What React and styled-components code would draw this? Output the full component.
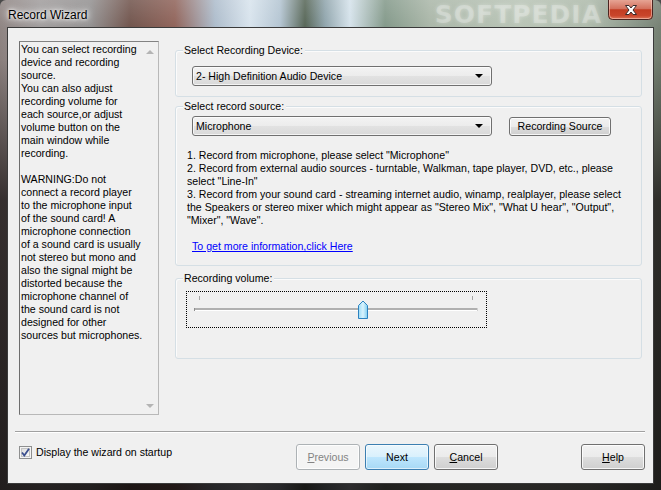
import React from "react";
import styled, { createGlobalStyle } from "styled-components";

const GlobalStyle = createGlobalStyle`
  html, body {
    margin: 0;
    padding: 0;
    width: 661px;
    height: 490px;
    overflow: hidden;
    background: #4a4a4a;
  }
  body {
    font-family: "Liberation Sans", Arial, sans-serif;
    font-size: 10.6px;
    color: #000;
  }
`;

const Frame = styled.div`
  width: 661px;
  height: 490px;
  box-sizing: border-box;
  border-radius: 6px 6px 0 0;
  overflow: hidden;
  display: flex;
  flex-direction: column;
  background:
    linear-gradient(to bottom, rgba(255, 255, 255, 0.18) 0px, rgba(255, 255, 255, 0.05) 28px, rgba(0, 0, 0, 0) 60px, rgba(25, 20, 20, 0.75) 200px, rgba(15, 12, 12, 0.85) 100%),
    linear-gradient(to right, #8a7f7d 0px, #9c9898 40px, #8e8c8c 90px, #6a4c44 130px, #8b5c52 175px, #a9b9c9 215px, #d6e2ec 250px, #b0c2d0 280px, #4e5e4e 305px, #8aa0a8 325px, #d3e1ea 350px, #7d9484 385px, #a6b3a4 430px, #b5c1b2 520px, #a9b6a6 590px, #7f8c7e 640px, #6f7a6c 661px);
`;

const TitleBar = styled.div`
  height: 28px;
  flex: none;
  display: flex;
  align-items: flex-start;
  padding-left: 8px;
`;

const Title = styled.div`
  margin-top: 8px;
  font-family: "Liberation Sans", Arial, sans-serif;
  font-size: 12px;
  line-height: 14px;
  color: #000;
  text-shadow: 0 0 6px #fff, 0 0 10px rgba(255, 255, 255, 0.9), 0 0 3px #fff;
`;

const Watermark = styled.div`
  margin: 2px 0 0 auto;
  font-family: "DejaVu Sans", sans-serif;
  font-weight: bold;
  font-size: 25px;
  line-height: 26px;
  letter-spacing: 1px;
  color: rgba(255, 255, 255, 0.25);
  text-shadow: 0 0 4px rgba(255, 255, 255, 0.3);
`;

const CloseButton = styled.div`
  width: 45px;
  height: 20px;
  margin: 0 8px 0 6px;
  flex: none;
`;

const Client = styled.div`
  flex: none;
  margin: 0 8px;
  width: 645px;
  height: 455px;
  background: #f0f0f0;
  box-shadow: 0 0 0 1px #3a3a3a;
  display: flex;
  flex-direction: column;
`;

const Body = styled.div`
  height: 403px;
  display: flex;
`;

const InfoPanel = styled.div`
  margin: 13px 0 0 11px;
  width: 140px;
  height: 374px;
  box-sizing: border-box;
  border: 1px solid #b8b8b8;
  border-top-color: #828282;
  border-left-color: #6e6e6e;
  display: flex;
`;

const InfoText = styled.div`
  flex: 1;
  padding: 1px 0 0 1px;
  line-height: 13px;
  white-space: pre;
  overflow: hidden;
`;

const ScrollColumn = styled.div`
  width: 16px;
  display: flex;
  flex-direction: column;
  justify-content: space-between;
  align-items: center;
  padding: 8px 0 6px;
  box-sizing: border-box;
`;

const Arrow = styled.div`
  width: 0;
  height: 0;
  border-left: 4px solid transparent;
  border-right: 4px solid transparent;
  ${(p) => (p.$up ? "border-bottom: 4px solid #b4b4b4;" : "border-top: 4px solid #b4b4b4;")}
`;

const RightColumn = styled.div`
  margin-left: 16px;
  width: 467px;
`;

const Group = styled.div`
  margin-top: ${(p) => p.$mt}px;
  height: ${(p) => p.$h}px;
  box-sizing: border-box;
  border: 1px solid #d5dfe5;
  border-radius: 3px;
  box-shadow: inset 1px 1px 0 #fbfbfb;
`;

const Legend = styled.div`
  width: fit-content;
  margin: -7px 0 0 7px;
  padding: 0 2px 0 1px;
  background: #f0f0f0;
  line-height: 13px;
`;

const Combo = styled.div`
  margin: ${(p) => p.$mt}px 0 0 16px;
  width: 300px;
  height: 20px;
  box-sizing: border-box;
  border: 1px solid #707070;
  border-radius: 3px;
  background: linear-gradient(#f3f3f3 0%, #ececec 50%, #e2e2e2 51%, #d9d9d9 100%);
  box-shadow: inset 0 0 0 1px rgba(255, 255, 255, 0.7);
  display: flex;
  align-items: center;
  padding: 0 8px 0 3px;
  line-height: 13px;
`;

const ComboArrow = styled.div`
  margin-left: auto;
  width: 0;
  height: 0;
  border-left: 4px solid transparent;
  border-right: 4px solid transparent;
  border-top: 4px solid #000;
`;

const SourceRow = styled.div`
  display: flex;
  align-items: center;
  margin-top: 3px;
  gap: 17px;
`;

const SmallButton = styled.div`
  width: 102px;
  height: 19px;
  box-sizing: border-box;
  border: 1px solid #707070;
  border-radius: 3px;
  background: linear-gradient(#f2f2f2 0%, #ebebeb 50%, #dddddd 51%, #cfcfcf 100%);
  box-shadow: inset 0 0 0 1px rgba(255, 255, 255, 0.8);
  display: flex;
  align-items: center;
  justify-content: center;
  line-height: 13px;
`;

const Steps = styled.div`
  margin: 13px 0 0 11px;
  line-height: 13px;
  white-space: pre;
`;

const MoreLink = styled.a`
  display: block;
  margin: 13px 0 0 16px;
  line-height: 13px;
  color: #0000ff;
  text-decoration: underline;
  width: fit-content;
`;

const SliderFocus = styled.div`
  margin: 6px 0 0 10px;
  width: 301px;
  height: 37px;
  box-sizing: border-box;
  border: 1px dotted #000;
`;

const Separator = styled.div`
  margin: 0 8px 0 7px;
  border-top: 1px solid #a0a0a0;
  border-bottom: 1px solid #ffffff;
  height: 0;
`;

const Footer = styled.div`
  display: flex;
  align-items: flex-start;
  padding: 11px 8px 0 11px;
`;

const CheckGroup = styled.label`
  flex: 1;
  display: flex;
  align-items: center;
  margin-top: 2px;
  gap: 4px;
  line-height: 13px;
`;

const ButtonGroup = styled.div`
  display: flex;
  gap: 5px;
`;

const WizardButton = styled.div`
  width: 64px;
  height: 26px;
  box-sizing: border-box;
  border-radius: 3px;
  display: flex;
  align-items: center;
  justify-content: center;
  line-height: 13px;
  margin-left: ${(p) => p.$ml || 0}px;
  border: 1px solid ${(p) => (p.$disabled ? "#adb2b5" : p.$default ? "#3c7fb1" : "#707070")};
  color: ${(p) => (p.$disabled ? "#838383" : "#000")};
  background: ${(p) =>
    p.$disabled
      ? "#f4f4f4"
      : p.$default
      ? "linear-gradient(#eaf6fd 0%, #d9f0fc 50%, #bee6fd 51%, #a7d9f5 100%)"
      : "linear-gradient(#f2f2f2 0%, #ebebeb 50%, #dddddd 51%, #cfcfcf 100%)"};
  box-shadow: inset 0 0 0 1px ${(p) => (p.$default ? "rgba(255,255,255,0.6)" : "rgba(255,255,255,0.8)")};
  u {
    text-decoration: underline;
  }
`;

function CloseGlyph() {
  return (
    <svg width="45" height="20" viewBox="0 0 45 20">
      <defs>
        <linearGradient id="closeFill" x1="0" y1="0" x2="0" y2="1">
          <stop offset="0" stopColor="#e6a494" />
          <stop offset="0.45" stopColor="#d3705c" />
          <stop offset="0.5" stopColor="#c23c22" />
          <stop offset="0.8" stopColor="#c9452b" />
          <stop offset="1" stopColor="#de7b5f" />
        </linearGradient>
      </defs>
      <path d="M0.5 0 V15.5 Q0.5 19.5 4.5 19.5 H40.5 Q44.5 19.5 44.5 15.5 V0" fill="url(#closeFill)" stroke="#4b2420" />
      <path d="M1.5 0 V15 Q1.5 18.5 5 18.5 H40 Q43.5 18.5 43.5 15 V0" fill="none" stroke="rgba(255,220,210,0.5)" />
      <path
        d="M17.5 5.5 H21 L23 8 L25 5.5 H28.5 L25 10 L28.5 14.5 H25 L23 12 L21 14.5 H17.5 L21 10 Z"
        fill="#ffffff"
        stroke="#3a2a2a"
        strokeWidth="1"
        strokeLinejoin="round"
      />
    </svg>
  );
}

function SliderDrawing() {
  return (
    <svg width="299" height="35" viewBox="0 0 299 35">
      <defs>
        <linearGradient id="thumbFill" x1="0" y1="0" x2="1" y2="0">
          <stop offset="0" stopColor="#9ddcf6" />
          <stop offset="0.5" stopColor="#d9f3fd" />
          <stop offset="1" stopColor="#7fcdf0" />
        </linearGradient>
      </defs>
      <line x1="12.5" y1="4" x2="12.5" y2="8" stroke="#a6a6a6" />
      <line x1="285.5" y1="4" x2="285.5" y2="8" stroke="#a6a6a6" />
      <rect x="7" y="16" width="284" height="2" fill="#b0b0b0" />
      <rect x="7" y="18" width="284" height="1" fill="#ffffff" />
      <rect x="7" y="16" width="1" height="3" fill="#8e8e8e" />
      <rect x="290" y="16" width="1" height="3" fill="#d0d0d0" />
      <path
        d="M171.5 26.5 V13.5 L176 9 L180.5 13.5 V26.5 Z"
        fill="url(#thumbFill)"
        stroke="#2c82c0"
        strokeLinejoin="round"
      />
    </svg>
  );
}

function CheckBox() {
  return (
    <svg width="13" height="13" viewBox="0 0 13 13">
      <defs>
        <linearGradient id="boxFill" x1="0" y1="0" x2="1" y2="1">
          <stop offset="0" stopColor="#dcdcdc" />
          <stop offset="1" stopColor="#fbfbfb" />
        </linearGradient>
      </defs>
      <rect x="0.5" y="0.5" width="12" height="12" fill="#f4f4f4" stroke="#8e8f8f" />
      <rect x="2.5" y="2.5" width="8" height="8" fill="url(#boxFill)" stroke="#c4c4c4" />
      <path d="M3 6.5 L5.3 9.5 L10 2.8" fill="none" stroke="#3b4f8e" strokeWidth="1.8" />
    </svg>
  );
}

const infoLines = [
  "You can select recording",
  "device and recording",
  "source.",
  "You can also adjust",
  "recording volume for",
  "each source,or adjust",
  "volume button on the",
  "main window while",
  "recording.",
  "",
  "WARNING:Do not",
  "connect a record player",
  "to the microphone input",
  "of the sound card! A",
  "microphone connection",
  "of a sound card is usually",
  "not stereo but mono and",
  "also the signal might be",
  "distorted because the",
  "microphone channel of",
  "the sound card is not",
  "designed for other",
  "sources but microphones.",
];

const stepLines = [
  '1. Record from microphone, please select "Microphone"',
  '2. Record from external audio sources - turntable, Walkman, tape player, DVD, etc., please',
  'select "Line-In"',
  "3. Record from your sound card - streaming internet audio, winamp, realplayer, please select",
  'the Speakers or stereo mixer which might appear as "Stereo Mix", "What U hear", "Output",',
  '"Mixer", "Wave".',
];

export default function App() {
  return (
    <>
      <GlobalStyle />
      <Frame>
        <TitleBar>
          <Title>Record Wizard</Title>
          <Watermark>SOFTPEDIA</Watermark>
          <CloseButton>
            <CloseGlyph />
          </CloseButton>
        </TitleBar>
        <Client>
          <Body>
            <InfoPanel>
              <InfoText>{infoLines.join("\n")}</InfoText>
              <ScrollColumn>
                <Arrow $up />
                <Arrow />
              </ScrollColumn>
            </InfoPanel>
            <RightColumn>
              <Group $mt={22} $h={47}>
                <Legend>Select Recording Device:</Legend>
                <Combo $mt={9}>
                  2- High Definition Audio Device
                  <ComboArrow />
                </Combo>
              </Group>
              <Group $mt={9} $h={160}>
                <Legend>Select record source:</Legend>
                <SourceRow>
                  <Combo $mt={0}>
                    Microphone
                    <ComboArrow />
                  </Combo>
                  <SmallButton>Recording Source</SmallButton>
                </SourceRow>
                <Steps>{stepLines.join("\n")}</Steps>
                <MoreLink href="#">To get more information,click Here</MoreLink>
              </Group>
              <Group $mt={12} $h={81}>
                <Legend>Recording volume:</Legend>
                <SliderFocus>
                  <SliderDrawing />
                </SliderFocus>
              </Group>
            </RightColumn>
          </Body>
          <Separator />
          <Footer>
            <CheckGroup>
              <CheckBox />
              Display the wizard on startup
            </CheckGroup>
            <ButtonGroup>
              <WizardButton $disabled>
                <span>
                  <u>P</u>revious
                </span>
              </WizardButton>
              <WizardButton $default>Next</WizardButton>
              <WizardButton>
                <span>
                  <u>C</u>ancel
                </span>
              </WizardButton>
            </ButtonGroup>
            <WizardButton $ml={83}>
              <span>
                <u>H</u>elp
              </span>
            </WizardButton>
          </Footer>
        </Client>
      </Frame>
    </>
  );
}
